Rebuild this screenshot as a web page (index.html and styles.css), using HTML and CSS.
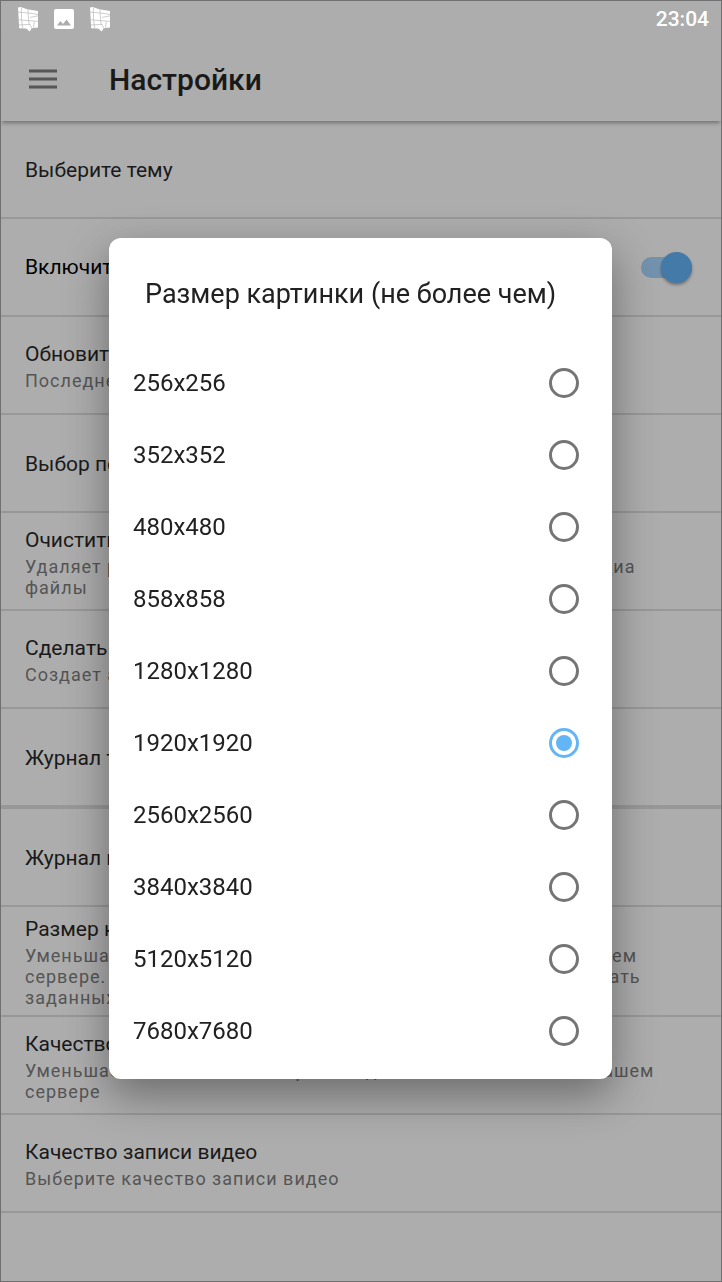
FILE: index.html
```html
<!DOCTYPE html>
<html lang="ru">
<head>
    <meta charset="UTF-8">
    <meta name="viewport" content="width=device-width, initial-scale=1.0">
    <title>Настройки</title>
    <link rel="stylesheet" href="styles.css">
</head>
<body>
    <svg class="defs" width="0" height="0" aria-hidden="true">
        <symbol id="map" viewBox="0 0 20 25">
            <path fill="#fff" d="M0 0.5 L3 0 L9 2.2 L20 4 L20 20.6 L13.5 21.2 L11.8 24.6 L8.2 21.4 L1.2 21.2 Z"/>
            <path fill="none" stroke="#adadad" stroke-width="0.6" d="M0 5 L10 6 M3.6 0.4 L3.2 5.4 M10 2.4 L10.4 11 M10.4 6 L20 7.4 M12 10.4 L20 8.8 M0.6 12.8 L20 14.4 M3.4 5.4 L3.6 12.8 L4.6 21 M10.4 11 L11.2 17.6 M1 18 L12 17.4 L13.6 21 M16.2 14.4 L15.6 20.8"/>
        </symbol>
    </svg>

    <div class="statusbar">
        <svg class="icon-map" aria-hidden="true"><use href="#map"/></svg>
        <svg class="icon-image" viewBox="0 0 20 20" aria-hidden="true">
            <path fill="#fff" fill-rule="evenodd" d="M2 0 H18 Q20 0 20 2 V18 Q20 20 18 20 H2 Q0 20 0 18 V2 Q0 0 2 0 Z M3 16.4 H17 L12.6 10.4 L9 15 L6.4 12 Z"/>
        </svg>
        <svg class="icon-map" aria-hidden="true"><use href="#map"/></svg>
        <span class="clock">23:04</span>
    </div>

    <header class="toolbar">
        <button class="menu" type="button" aria-label="Меню">
            <svg viewBox="0 0 28 20" aria-hidden="true">
                <path stroke="#565656" stroke-width="3" d="M0 2 H28 M0 10 H28 M0 18 H28"/>
            </svg>
        </button>
        <h1>Настройки</h1>
    </header>

    <main class="settings">
        <section class="row">
            <h2>Выберите тему</h2>
        </section>
        <section class="row row-switch">
            <label for="notify">Включить уведомления</label>
            <input class="switch" type="checkbox" role="switch" id="notify" checked>
        </section>
        <section class="row">
            <h2>Обновить данные</h2>
            <p>Последнее обновление сегодня</p>
        </section>
        <section class="row">
            <h2>Выбор подложки</h2>
        </section>
        <section class="row">
            <h2>Очистить кэш</h2>
            <p>Удаляет ранее загруженные на это устройство все фото и медиа файлы</p>
        </section>
        <section class="row">
            <h2>Сделать копию</h2>
            <p>Создает архив</p>
        </section>
        <section class="row row-last">
            <h2>Журнал трекера</h2>
        </section>
        <section class="row">
            <h2>Журнал команд</h2>
        </section>
        <section class="row">
            <h2>Размер картинки</h2>
            <p>Уменьшает размер всех картинок для экономии места на вашем сервере. Ширина и высота каждой картинки не будет превышать заданных значений</p>
        </section>
        <section class="row">
            <h2>Качество картинки</h2>
            <p>Уменьшает качество всех картинок для экономии места на вашем сервере</p>
        </section>
        <section class="row">
            <h2>Качество записи видео</h2>
            <p>Выберите качество записи видео</p>
        </section>
    </main>

    <div class="overlay">
        <form class="dialog" role="dialog" aria-labelledby="dialogTitle">
            <h2 id="dialogTitle">Размер картинки (не более чем)</h2>
            <label class="option">256x256<input type="radio" name="size" value="256"></label>
            <label class="option">352x352<input type="radio" name="size" value="352"></label>
            <label class="option">480x480<input type="radio" name="size" value="480"></label>
            <label class="option">858x858<input type="radio" name="size" value="858"></label>
            <label class="option">1280x1280<input type="radio" name="size" value="1280"></label>
            <label class="option">1920x1920<input type="radio" name="size" value="1920" checked></label>
            <label class="option">2560x2560<input type="radio" name="size" value="2560"></label>
            <label class="option">3840x3840<input type="radio" name="size" value="3840"></label>
            <label class="option">5120x5120<input type="radio" name="size" value="5120"></label>
            <label class="option">7680x7680<input type="radio" name="size" value="7680"></label>
        </form>
    </div>
</body>
</html>
```
FILE: styles.css
```css
* {
    margin: 0;
    padding: 0;
    box-sizing: border-box;
}

body {
    font-family: Roboto, sans-serif;
    background-color: #adadad;
    color: #1a1a1a;
    border: 1px solid #707070;
    min-height: 100vh;
}

.defs {
    position: absolute;
}

/* Status bar */
.statusbar {
    display: flex;
    align-items: center;
    gap: 16px;
    height: 36px;
    padding: 0 12px 0 17px;
    color: #fff;
}

.icon-map {
    width: 20px;
    height: 25px;
}

.icon-image {
    width: 20px;
    height: 20px;
}

.clock {
    margin-left: auto;
    font-size: 21px;
    font-weight: 500;
}

/* Toolbar */
.toolbar {
    display: flex;
    align-items: center;
    gap: 52px;
    height: 84px;
    padding: 0 28px;
    box-shadow: 0 3px 4px -1px rgba(0, 0, 0, 0.35);
}

.menu {
    display: flex;
    border: none;
    background: none;
    cursor: pointer;
}

.menu svg {
    width: 28px;
    height: 20px;
}

h1 {
    font-size: 30px;
    font-weight: 500;
}

/* Settings list */
.row {
    display: flex;
    flex-direction: column;
    justify-content: center;
    gap: 3px;
    min-height: 98px;
    padding: 10px 24px 7px;
    border-bottom: 2px solid #989898;
}

.row h2,
.row label {
    font-size: 21px;
    font-weight: 400;
    line-height: 25px;
}

.row p {
    font-size: 18px;
    line-height: 21px;
    letter-spacing: 1px;
    color: #555;
}

.row-last {
    min-height: 100px;
    border-bottom-width: 4px;
}

.row-switch {
    flex-direction: row;
    align-items: center;
    justify-content: space-between;
    padding: 8px 29px 8px 24px;
    color: #000;
}

.switch {
    appearance: none;
    display: flex;
    align-items: center;
    justify-content: flex-end;
    width: 51px;
    height: 21px;
    border-radius: 11px;
    background-color: #7392ad;
}

.switch::before {
    content: "";
    width: 31px;
    height: 31px;
    flex-shrink: 0;
    border-radius: 50%;
    background-color: #437aa7;
    box-shadow: 0 2px 3px rgba(0, 0, 0, 0.35);
}

/* Dialog */
.overlay {
    position: fixed;
    inset: 0;
    display: flex;
    align-items: center;
    justify-content: center;
    padding: 34px 110px 0 109px;
}

.dialog {
    width: 100%;
    max-width: 560px;
    padding-bottom: 12px;
    border-radius: 12px;
    background-color: #fff;
    color: #212121;
    box-shadow: 0 16px 44px rgba(0, 0, 0, 0.38);
}

.dialog h2 {
    padding: 40px 36px 37px;
    font-size: 27px;
    font-weight: 400;
    line-height: 32px;
}

.option {
    display: flex;
    align-items: center;
    justify-content: space-between;
    height: 72px;
    padding: 0 33px 0 24px;
    font-size: 24px;
    cursor: pointer;
}

.option input {
    appearance: none;
    width: 30px;
    height: 30px;
    border: 3px solid #757575;
    border-radius: 50%;
}

.option input:checked {
    border-color: #64b5f6;
    padding: 4px;
    background: #64b5f6 content-box;
}
```
